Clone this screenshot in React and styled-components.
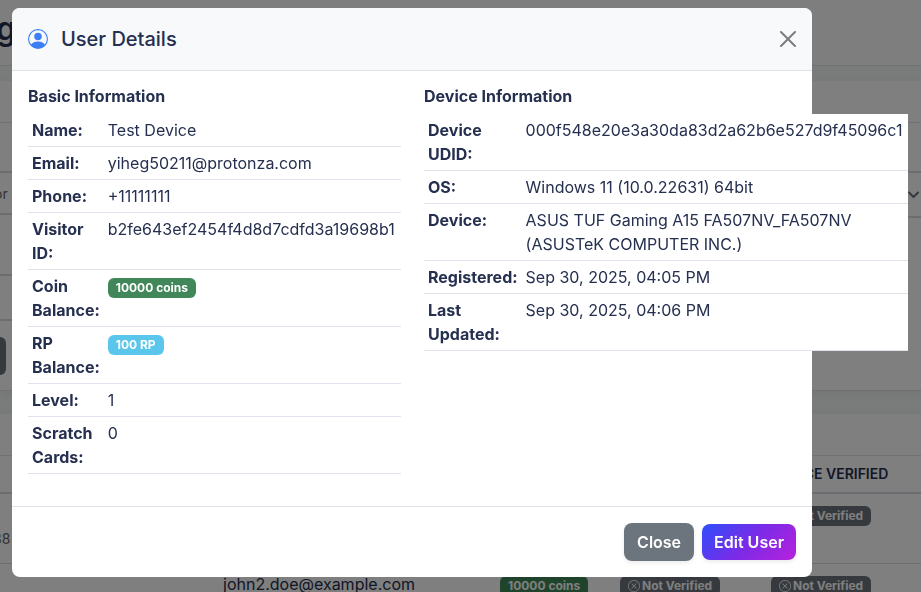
import React from "react";
import styled, { createGlobalStyle, css } from "styled-components";

const GlobalStyle = createGlobalStyle`
  *, *::before, *::after { box-sizing: border-box; }
  body {
    margin: 0;
    overflow: hidden;
    font-family: Inter, "Liberation Sans", sans-serif;
    font-size: 16px;
    line-height: 24px;
    color: #252f4f;
    background: #f8f9fa;
  }
`;

/* Page behind the dialog */
const Page = styled.div`
  height: 100vh;
  overflow: hidden;
  background: #f4f7f7;
`;

const TopBar = styled.header`
  height: 66px;
  padding-top: 9px;
  background: #fcfcfc;
  border-bottom: 1px solid #dfe0e3;
`;

const PageTitle = styled.h1`
  margin: 0 0 0 -4px;
  font-size: 32px;
  line-height: 40px;
  font-weight: 600;
`;

const Card = styled.section`
  margin-top: ${(p) => p.$gap}px;
  background: #fefefe;
  border-bottom: 1px solid #e2e2e4;
  box-shadow: 0 2px 10px rgba(0, 0, 0, 0.06);
`;

const CardHeader = styled.div`
  height: 42px;
  border-bottom: 1px solid #e2e2e6;
`;

const Filters = styled.div`
  padding: 48px 0 15px;
`;

const FilterRow = styled.div`
  display: flex;
  align-items: flex-start;
  justify-content: space-between;
  margin-bottom: ${(p) => p.$gap}px;
`;

const fieldEdge = css`
  height: 47px;
  font: inherit;
  color: #666;
  background: #fefefe;
  border: solid #d9d9e3;
  border-width: 2px 0;
  border-radius: 0;
`;

const SearchField = styled.input`
  ${fieldEdge}
  width: 60px;
  height: ${(p) => (p.$tall ? 47 : 44)}px;
  padding: 0;
  text-indent: -6px;
  font-size: 14px;
  &::placeholder { color: #666; opacity: 1; }
`;

const SelectWrap = styled.label`
  display: grid;
  align-items: center;
  svg, select { grid-area: 1 / 1; }
  svg { justify-self: end; z-index: 1; }
`;

const Select = styled.select`
  ${fieldEdge}
  width: 160px;
  appearance: none;
`;

const FilterButton = styled.button`
  display: block;
  width: 6px;
  height: 38px;
  padding: 0;
  border: 0;
  border-radius: 0 8px 8px 0;
  background: #6c757d;
`;

const UserTable = styled.table`
  width: 100%;
  table-layout: fixed;
  border-collapse: separate;
  border-spacing: 0;
  th, td { padding: 0; vertical-align: top; text-align: left; white-space: nowrap; }
  th {
    height: 38px;
    padding-top: 6px;
    font-size: 14px;
    font-weight: 600;
    border-bottom: 2px solid #d9d9e3;
  }
  td {
    height: 70px;
    padding-top: 8px;
    border-bottom: 1px solid #dcdce2;
  }
`;

const IdText = styled.span`
  display: block;
  margin: 25px 0 0 -7px;
  font-size: 14px;
  color: #666;
`;

const Badge = styled.span`
  display: inline-flex;
  align-items: center;
  gap: 2px;
  height: 20px;
  margin-top: 4px;
  padding: 0 8px;
  border-radius: 6px;
  font-size: 12px;
  line-height: 20px;
  font-weight: 700;
  color: #fff;
  vertical-align: top;
  background: ${(p) => ({ green: "#418759", blue: "#5bc6eb", grey: "#6c757d" })[p.$tone]};
`;

/* Dialog */
const Backdrop = styled.div`
  position: fixed;
  inset: 0;
  padding: 8px 12px;
  background: rgba(0, 0, 0, 0.5);
`;

const Dialog = styled.div`
  max-width: 800px;
  border-radius: 8px;
  background: #fff;
`;

const DialogHeader = styled.header`
  display: flex;
  align-items: center;
  padding: 16px;
  border-bottom: 1px solid #dee2e6;
  border-radius: 8px 8px 0 0;
  background: #f8f9fb;
`;

const DialogTitle = styled.h5`
  display: flex;
  align-items: center;
  gap: 13px;
  margin: 0;
  font-size: 20px;
  line-height: 30px;
  font-weight: 500;
`;

const IconButton = styled.button`
  display: flex;
  margin-left: auto;
  padding: 0;
  border: 0;
  background: none;
  color: #7b7c7e;
`;

const DialogBody = styled.div`
  display: grid;
  grid-template-columns: repeat(2, minmax(0, 1fr));
  gap: 24px;
  padding: 16px;
`;

const SectionTitle = styled.h6`
  margin: 0 0 8px;
  font-size: 16px;
  line-height: 19px;
  font-weight: 700;
`;

const DetailTable = styled.table`
  width: 100%;
  min-width: ${(p) => p.$minWidth}px;
  margin-bottom: 16px;
  border-collapse: separate;
  border-spacing: 0;
  background: #fff;
  th, td {
    padding: 4px;
    text-align: left;
    vertical-align: top;
    border-bottom: 1px solid #e1e2ec;
  }
  th { width: 1px; font-weight: 700; }
`;

const DialogFooter = styled.footer`
  display: flex;
  align-items: center;
  justify-content: flex-end;
  gap: 8px;
  padding: 16px;
  border-top: 1px solid #e1e2ec;
`;

const Button = styled.button`
  padding: ${(p) => (p.$primary ? "6px 12px" : "7px 13px")};
  border: 0;
  border-radius: 8px;
  font: inherit;
  font-weight: 600;
  color: #fff;
  background: ${(p) => (p.$primary ? "linear-gradient(135deg, #2d4ffb, #7a2be8 50%, #b721dc)" : "#6c757d")};
  box-shadow: 0 2px 4px rgba(0, 0, 0, 0.08);
`;

const PersonIcon = () => (
  <svg width="20" height="20" viewBox="0 0 16 16" fill="#3b7ff5" aria-hidden="true">
    <path d="M11 6a3 3 0 1 1-6 0 3 3 0 0 1 6 0" />
    <path fillRule="evenodd" d="M0 8a8 8 0 1 1 16 0A8 8 0 0 1 0 8m8-7a7 7 0 0 0-5.468 11.37C3.242 11.226 4.805 10 8 10s4.757 1.225 5.468 2.37A7 7 0 0 0 8 1" />
  </svg>
);

const CloseIcon = () => (
  <svg width="16" height="16" viewBox="0 0 16 16" fill="currentColor" aria-hidden="true">
    <path d="M.293.293a1 1 0 0 1 1.414 0L8 6.586 14.293.293a1 1 0 1 1 1.414 1.414L9.414 8l6.293 6.293a1 1 0 0 1-1.414 1.414L8 9.414l-6.293 6.293a1 1 0 0 1-1.414-1.414L6.586 8 .293 1.707a1 1 0 0 1 0-1.414z" />
  </svg>
);

const CrossCircleIcon = () => (
  <svg width="12" height="12" viewBox="0 0 16 16" fill="currentColor" aria-hidden="true">
    <path d="M8 15A7 7 0 1 1 8 1a7 7 0 0 1 0 14m0 1A8 8 0 1 0 8 0a8 8 0 0 0 0 16" />
    <path d="M4.646 4.646a.5.5 0 0 1 .708 0L8 7.293l2.646-2.647a.5.5 0 0 1 .708.708L8.707 8l2.647 2.646a.5.5 0 0 1-.708.708L8 8.707l-2.646 2.647a.5.5 0 0 1-.708-.708L7.293 8 4.646 5.354a.5.5 0 0 1 0-.708" />
  </svg>
);

const ChevronIcon = () => (
  <svg width="14" height="12" viewBox="0 0 14 12" fill="none" stroke="#343a40" strokeWidth="2" strokeLinecap="round" strokeLinejoin="round" aria-hidden="true">
    <path d="M2 3.500l4.500 4.500L11 3.500" />
  </svg>
);

const NotVerified = () => (
  <Badge $tone="grey"><CrossCircleIcon />Not Verified</Badge>
);

const basic = [
  ["Name:", "Test Device"],
  ["Email:", "yiheg50211@protonza.com"],
  ["Phone:", "+11111111"],
  ["Visitor ID:", "b2fe643ef2454f4d8d7cdfd3a19698b1"],
  ["Coin Balance:", <Badge $tone="green">10000 coins</Badge>],
  ["RP Balance:", <Badge $tone="blue">100 RP</Badge>],
  ["Level:", "1"],
  ["Scratch Cards:", "0"],
];

const device = [
  ["Device UDID:", "000f548e20e3a30da83d2a62b6e527d9f45096c1"],
  ["OS:", "Windows 11 (10.0.22631) 64bit"],
  ["Device:", "ASUS TUF Gaming A15 FA507NV_FA507NV (ASUSTeK COMPUTER INC.)"],
  ["Registered:", "Sep 30, 2025, 04:05 PM"],
  ["Last Updated:", "Sep 30, 2025, 04:06 PM"],
];

const Details = ({ title, rows, minWidth }) => (
  <section>
    <SectionTitle>{title}</SectionTitle>
    <DetailTable $minWidth={minWidth}>
      <tbody>
        {rows.map(([label, value]) => (
          <tr key={label}><th scope="row">{label}</th><td>{value}</td></tr>
        ))}
      </tbody>
    </DetailTable>
  </section>
);

export default function App() {
  return (
    <>
      <GlobalStyle />
      <Page>
        <TopBar><PageTitle>g</PageTitle></TopBar>
        <Card $gap={15}>
          <CardHeader />
          <Filters>
            <FilterRow $gap={56}>
              <SearchField aria-label="Search" placeholder="or" />
              <SelectWrap><Select aria-label="Status" /><ChevronIcon /></SelectWrap>
            </FilterRow>
            <FilterRow $gap={16}>
              <SearchField aria-label="Date" $tall />
            </FilterRow>
            <FilterButton aria-label="Filter" />
          </Filters>
        </Card>
        <Card $gap={23}>
          <CardHeader />
          <UserTable>
            <colgroup>
              <col width="223" /><col width="277" /><col width="120" /><col width="151" /><col />
            </colgroup>
            <thead><tr><th /><th /><th /><th /><th>DEVICE VERIFIED</th></tr></thead>
            <tbody>
              <tr><td><IdText>38</IdText></td><td /><td /><td /><td><NotVerified /></td></tr>
              <tr>
                <td /><td>john2.doe@example.com</td>
                <td><Badge $tone="green">10000 coins</Badge></td>
                <td><NotVerified /></td><td><NotVerified /></td>
              </tr>
            </tbody>
          </UserTable>
        </Card>
      </Page>
      <Backdrop>
        <Dialog role="dialog" aria-modal="true" aria-labelledby="dialog-title">
          <DialogHeader>
            <DialogTitle id="dialog-title"><PersonIcon />User Details</DialogTitle>
            <IconButton aria-label="Dismiss"><CloseIcon /></IconButton>
          </DialogHeader>
          <DialogBody>
            <Details title="Basic Information" rows={basic} minWidth={373} />
            <Details title="Device Information" rows={device} minWidth={484} />
          </DialogBody>
          <DialogFooter>
            <Button type="button">Close</Button>
            <Button type="button" $primary>Edit User</Button>
          </DialogFooter>
        </Dialog>
      </Backdrop>
    </>
  );
}
